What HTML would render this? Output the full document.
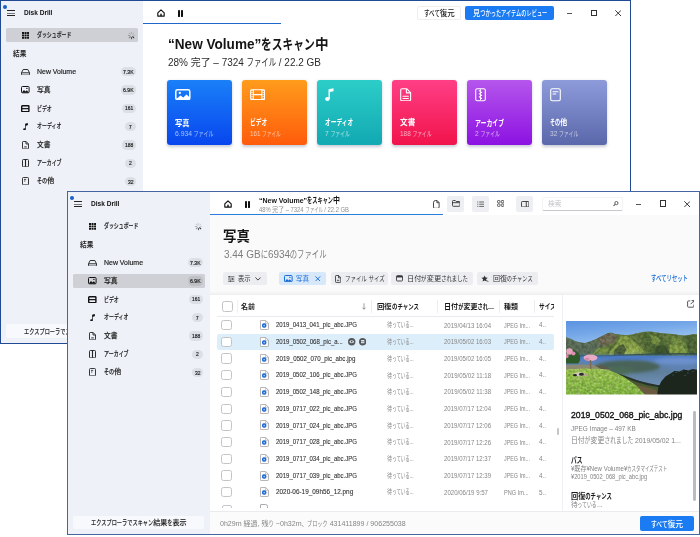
<!DOCTYPE html>
<html lang="ja"><head><meta charset="utf-8"><title>Disk Drill</title>
<style>
html,body{margin:0;padding:0}
body{width:700px;height:537px;position:relative;overflow:hidden;background:#fff;font-family:"Liberation Sans","Noto Sans CJK JP",sans-serif;}
body div,body svg,.t{position:absolute;}
.t{white-space:nowrap;display:block;}
div{box-sizing:border-box}
</style></head><body>
<div id="window-dashboard" style="left:0;top:0;width:700px;height:537px">
<div style="left:0px;top:0px;width:631px;height:344px;background:#fff;border:1px solid #214a94;"></div>
<div class="sidebar" style="left:0;top:0;width:700px;height:537px">
<div style="left:1px;top:1px;width:142px;height:342px;background:#eef1f8;"></div>
<div style="left:2.8px;top:4.8px;width:4.3px;height:4.3px;background:#1b5fc9;border-radius:50%;"></div>
<div style="left:6.7px;top:10px;width:8px;height:0.9px;background:#222;"></div>
<div style="left:6.7px;top:12.5px;width:8px;height:0.9px;background:#777;"></div>
<div style="left:6.7px;top:15px;width:8px;height:0.9px;background:#222;"></div>
<span id="t1" class="t" style="top:7.18px;font-size:7.7px;line-height:11.55px;color:#111;font-weight:700;left:23.9px;transform-origin:0 50%;transform:scaleX(0.8521);">Disk Drill</span>
<div style="left:6px;top:28px;width:131.5px;height:14.4px;background:#ced0d5;border-radius:1.5px;"></div>
<svg style="left:22.2px;top:32px;" width="7.2" height="6.8" viewBox="0 0 7.2 6.8"><rect x="0.00" y="0.00" width="2.05" height="1.95" rx=".3" fill="#111"/><rect x="2.55" y="0.00" width="2.05" height="1.95" rx=".3" fill="#111"/><rect x="5.10" y="0.00" width="2.05" height="1.95" rx=".3" fill="#111"/><rect x="0.00" y="2.40" width="2.05" height="1.95" rx=".3" fill="#111"/><rect x="2.55" y="2.40" width="2.05" height="1.95" rx=".3" fill="#111"/><rect x="5.10" y="2.40" width="2.05" height="1.95" rx=".3" fill="#111"/><rect x="0.00" y="4.80" width="2.05" height="1.95" rx=".3" fill="#111"/><rect x="2.55" y="4.80" width="2.05" height="1.95" rx=".3" fill="#111"/><rect x="5.10" y="4.80" width="2.05" height="1.95" rx=".3" fill="#111"/></svg>
<span id="t2" class="t" style="top:29.89px;font-size:7.1px;line-height:10.65px;color:#1f1f1f;font-weight:500;-webkit-text-stroke:0.18px #1f1f1f;left:36.6px;transform-origin:0 50%;transform:scaleX(0.9362);"><span style="display:inline-block;transform:scaleX(0.74);transform-origin:0 50%;margin-right:-1.820em">ダッシュボード</span></span>
<svg style="left:127.1px;top:30.8px;" width="9" height="9" viewBox="0 0 9 9"><path d="M6.20 4.50L7.70 4.50" stroke="#222" stroke-opacity="0.14" stroke-width="1.050" stroke-linecap="round"/><path d="M5.70 5.70L6.76 6.76" stroke="#222" stroke-opacity="0.95" stroke-width="1.050" stroke-linecap="round"/><path d="M4.50 6.20L4.50 7.70" stroke="#222" stroke-opacity="0.7" stroke-width="1.050" stroke-linecap="round"/><path d="M3.30 5.70L2.24 6.76" stroke="#222" stroke-opacity="0.45" stroke-width="1.050" stroke-linecap="round"/><path d="M2.80 4.50L1.30 4.50" stroke="#222" stroke-opacity="0.3" stroke-width="1.050" stroke-linecap="round"/><path d="M3.30 3.30L2.24 2.24" stroke="#222" stroke-opacity="0.2" stroke-width="1.050" stroke-linecap="round"/><path d="M4.50 2.80L4.50 1.30" stroke="#222" stroke-opacity="0.16" stroke-width="1.050" stroke-linecap="round"/><path d="M5.70 3.30L6.76 2.24" stroke="#222" stroke-opacity="0.14" stroke-width="1.050" stroke-linecap="round"/></svg>
<span id="t3" class="t" style="top:49.38px;font-size:7.1px;line-height:10.65px;color:#1f1f1f;font-weight:700;left:12.9px;transform-origin:0 50%;transform:scaleX(0.9445);">結果</span>
<svg style="left:21.2px;top:68.6px;" width="9" height="6.6" viewBox="0 0 9 6.6"><path d="M2.2 .5h4.6l1.7 3.2v1.6a.8.8 0 0 1-.8.8H1.3a.8.8 0 0 1-.8-.8V3.7z M.6 3.8h7.8" fill="none" stroke="#222" stroke-width=".95" stroke-linejoin="round"/></svg>
<span id="t4" class="t" style="top:67.06px;font-size:7.1px;line-height:10.65px;color:#1f1f1f;font-weight:500;-webkit-text-stroke:0.18px #1f1f1f;left:36.7px;transform-origin:0 50%;transform:scaleX(0.9792);">New Volume</span>
<svg style="left:21.4px;top:86.4px;" width="8.6" height="7.3" viewBox="0 0 8.6 7.3"><rect x=".5" y=".5" width="7.6" height="6.3" rx=".9" fill="none" stroke="#111" stroke-width="1"/><path d="M.8 6.5l2.2-2.6 1.5 1.5 1.3-1.2 2 2.3z" fill="#111"/><circle cx="5.9" cy="2.4" r=".7" fill="#111"/></svg>
<span id="t5" class="t" style="top:85px;font-size:7.1px;line-height:10.65px;color:#1f1f1f;font-weight:500;-webkit-text-stroke:0.18px #1f1f1f;left:36.7px;transform-origin:0 50%;transform:scaleX(0.9515);">写真</span>
<svg style="left:21.4px;top:104.6px;" width="8.6" height="7.3" viewBox="0 0 8.6 7.3"><rect x=".7" y=".7" width="7.2" height="5.9" rx=".6" fill="none" stroke="#111" stroke-width="1.4"/><path d="M.7 3.65h7.2" stroke="#111" stroke-width="1.2"/></svg>
<span id="t6" class="t" style="top:103.5px;font-size:7.1px;line-height:10.65px;color:#1f1f1f;font-weight:500;-webkit-text-stroke:0.18px #1f1f1f;left:36.7px;transform-origin:0 50%;transform:scaleX(0.9398);"><span style="display:inline-block;transform:scaleX(0.74);transform-origin:0 50%;margin-right:-0.780em">ビデオ</span></span>
<svg style="left:23.2px;top:122.7px;" width="5" height="7.6" viewBox="0 0 5 7.6"><path d="M2.500 6.200V.9L4.700.4v1.500L2.500 2.400" fill="#111" stroke="#111" stroke-width=".7" stroke-linejoin="round"/><ellipse cx="1.500" cy="6.300" rx="1.300" ry="1" fill="#111"/></svg>
<span id="t7" class="t" style="top:120.92px;font-size:7.1px;line-height:10.65px;color:#1f1f1f;font-weight:500;-webkit-text-stroke:0.18px #1f1f1f;left:36.5px;transform-origin:0 50%;transform:scaleX(0.9425);"><span style="display:inline-block;transform:scaleX(0.74);transform-origin:0 50%;margin-right:-1.300em">オーディオ</span></span>
<svg style="left:22.2px;top:140.7px;" width="7" height="8.4" viewBox="0 0 7 8.4"><path d="M1.2.5h2.9l2.4 2.4v4.3a.7.7 0 0 1-.7.7H1.2a.7.7 0 0 1-.7-.7V1.2a.7.7 0 0 1 .7-.7z M4 .6v2.4h2.4 M2.2 5.9h2.6" fill="none" stroke="#222" stroke-width=".9" stroke-linejoin="round"/></svg>
<span id="t8" class="t" style="top:139.72px;font-size:7.1px;line-height:10.65px;color:#1f1f1f;font-weight:500;-webkit-text-stroke:0.18px #1f1f1f;left:36.7px;transform-origin:0 50%;transform:scaleX(0.9445);">文書</span>
<svg style="left:22.2px;top:158.6px;" width="7" height="8.4" viewBox="0 0 7 8.4"><rect x=".5" y=".5" width="6" height="7.4" rx=".9" fill="none" stroke="#222" stroke-width=".95"/><path d="M3.5 .6v7.2" stroke="#222" stroke-width="1.1"/></svg>
<span id="t9" class="t" style="top:158.11px;font-size:7.1px;line-height:10.65px;color:#1f1f1f;font-weight:500;-webkit-text-stroke:0.18px #1f1f1f;left:36.7px;transform-origin:0 50%;transform:scaleX(0.9485);"><span style="display:inline-block;transform:scaleX(0.74);transform-origin:0 50%;margin-right:-1.300em">アーカイブ</span></span>
<svg style="left:22.2px;top:176.6px;" width="7" height="8.4" viewBox="0 0 7 8.4"><rect x=".5" y=".5" width="6" height="7.4" rx=".9" fill="none" stroke="#222" stroke-width=".9"/><path d="M2 2.4h2.2 M2 4h1.4" stroke="#222" stroke-width=".8"/></svg>
<span id="t10" class="t" style="top:176.31px;font-size:7.1px;line-height:10.65px;color:#1f1f1f;font-weight:500;-webkit-text-stroke:0.18px #1f1f1f;left:36.7px;transform-origin:0 50%;transform:scaleX(0.9719);"><span style="display:inline-block;transform:scaleX(0.74);transform-origin:0 50%;margin-right:-0.520em">その</span>他</span>
<div style="left:120.5px;top:67.3px;width:15.5px;height:9.2px;background:rgba(0,0,10,.075);border-radius:4.600px;"></div>
<span id="t11" class="t" style="top:67.28px;font-size:6.1px;line-height:9.15px;color:#1a1a1a;-webkit-text-stroke:0.18px #1a1a1a;left:122.95px;transform-origin:0 50%;transform:scaleX(0.8448);">7.3K</span>
<div style="left:120.5px;top:85.4px;width:15.5px;height:9.2px;background:rgba(0,0,10,.075);border-radius:4.600px;"></div>
<span id="t12" class="t" style="top:85.36px;font-size:6.1px;line-height:9.15px;color:#1a1a1a;-webkit-text-stroke:0.18px #1a1a1a;left:122.95px;transform-origin:0 50%;transform:scaleX(0.8448);">6.9K</span>
<div style="left:122px;top:103.9px;width:14px;height:9.2px;background:rgba(0,0,10,.075);border-radius:4.600px;"></div>
<span id="t13" class="t" style="top:103.28px;font-size:6.1px;line-height:9.15px;color:#1a1a1a;-webkit-text-stroke:0.18px #1a1a1a;left:124.9px;transform-origin:0 50%;transform:scaleX(0.8061);">161</span>
<div style="left:125px;top:122.3px;width:11px;height:9.2px;background:rgba(0,0,10,.075);border-radius:4.600px;"></div>
<span id="t14" class="t" style="top:122.23px;font-size:6.1px;line-height:9.15px;color:#1a1a1a;-webkit-text-stroke:0.18px #1a1a1a;left:129.2px;transform-origin:0 50%;transform:scaleX(0.7668);">7</span>
<div style="left:122px;top:140.4px;width:14px;height:9.2px;background:rgba(0,0,10,.075);border-radius:4.600px;"></div>
<span id="t15" class="t" style="top:140.34px;font-size:6.1px;line-height:9.15px;color:#1a1a1a;-webkit-text-stroke:0.18px #1a1a1a;left:124.8px;transform-origin:0 50%;transform:scaleX(0.8258);">188</span>
<div style="left:125px;top:158.7px;width:11px;height:9.2px;background:rgba(0,0,10,.075);border-radius:4.600px;"></div>
<span id="t16" class="t" style="top:157.92px;font-size:6.1px;line-height:9.15px;color:#1a1a1a;-webkit-text-stroke:0.18px #1a1a1a;left:129.1px;transform-origin:0 50%;transform:scaleX(0.8258);">2</span>
<div style="left:124.6px;top:177px;width:11.4px;height:9.2px;background:rgba(0,0,10,.075);border-radius:4.600px;"></div>
<span id="t17" class="t" style="top:176.56px;font-size:6.1px;line-height:9.15px;color:#1a1a1a;-webkit-text-stroke:0.18px #1a1a1a;left:127.5px;transform-origin:0 50%;transform:scaleX(0.8258);">32</span>
<div style="left:6px;top:323.9px;width:130.5px;height:13.8px;background:#f8f9fc;border-radius:1.5px;"></div>
<span id="t18" class="t" style="top:326.78px;font-size:7px;line-height:10.5px;color:#1f1f1f;font-weight:500;-webkit-text-stroke:0.1px #1f1f1f;left:24px;transform-origin:0 50%;transform:scaleX(1.0036);"><span style="display:inline-block;transform:scaleX(0.74);transform-origin:0 50%;margin-right:-3.120em">エクスプローラでスキャン</span>結果<span style="display:inline-block;transform:scaleX(0.74);transform-origin:0 50%;margin-right:-0.260em">を</span>表示</span>
</div>
<div class="main" style="left:0;top:0;width:700px;height:537px">
<svg style="left:156.5px;top:9.3px;" width="8" height="7.8" viewBox="0 0 8 7.8"><path d="M.8 3.900L4 .8 7.200 3.900V7.100H.8z" fill="none" stroke="#111" stroke-width="1.150" stroke-linejoin="round"/><path d="M3.300 7V5.100a.7.700 0 0 1 1.400 0V7z" fill="#111"/></svg>
<div style="left:177.5px;top:10.1px;width:2px;height:6.9px;background:#111;border-radius:.4px;"></div>
<div style="left:180.9px;top:10.1px;width:2px;height:6.9px;background:#111;border-radius:.4px;"></div>
<div style="left:143px;top:22.6px;width:138.3px;height:1.5px;background:#2067cc;"></div>
<div style="left:416.5px;top:6px;width:44.5px;height:14px;background:#fff;border:1px solid #eeeef1;border-radius:2px;"></div>
<span id="t19" class="t" style="top:8.01px;font-size:7.7px;line-height:11.55px;color:#222;font-weight:500;left:423.5px;transform-origin:0 50%;transform:scaleX(0.9681);"><span style="display:inline-block;transform:scaleX(0.74);transform-origin:0 50%;margin-right:-0.780em">すべて</span>復元</span>
<div style="left:465px;top:6px;width:88.6px;height:14px;background:#1a7bf2;border-radius:2px;"></div>
<span id="t20" class="t" style="top:8.45px;font-size:7.7px;line-height:11.55px;color:#fff;font-weight:500;left:473.1px;transform-origin:0 50%;transform:scaleX(0.9126);">見<span style="display:inline-block;transform:scaleX(0.74);transform-origin:0 50%;margin-right:-3.380em">つかったアイテムのレビュー</span></span>
<div style="left:567.2px;top:13px;width:5px;height:0.9px;background:#555;"></div>
<div style="left:590.5px;top:9.9px;width:6.4px;height:6.4px;background:transparent;border:.8px solid #333;"></div>
<svg style="left:614.5px;top:10px;" width="6.4" height="6.4" viewBox="0 0 6.4 6.4"><path d="M.3.3L6.1 6.1M6.1.3L.3 6.1" stroke="#222" stroke-width=".9"/></svg>
<span id="t21" class="t" style="top:33.9px;font-size:14px;line-height:21px;color:#151515;font-weight:700;left:167.5px;transform-origin:0 50%;transform:scaleX(0.9697);">“New Volume”<span style="display:inline-block;transform:scaleX(0.79);transform-origin:0 50%;margin-right:-1.050em">をスキャン</span>中</span>
<span id="t22" class="t" style="top:54.79px;font-size:10.4px;line-height:15.6px;color:#2b2b2b;left:167.6px;transform-origin:0 50%;transform:scaleX(0.9582);">28% 完了 – 7324 <span style="display:inline-block;transform:scaleX(0.74);transform-origin:0 50%;margin-right:-1.040em">ファイル</span> / 22.2 GB</span>
<div style="left:167px;top:80px;width:65px;height:65px;background:linear-gradient(180deg,#1a80f8,#0846ee);border-radius:3px;box-shadow:0 1.5px 3px rgba(60,70,110,.28);"></div>
<span id="t23" class="t" style="top:116.86px;font-size:8.3px;line-height:12.45px;color:#fff;font-weight:700;left:175px;transform-origin:0 50%;transform:scaleX(0.8670);">写真</span>
<span id="t24" class="t" style="top:129.04px;font-size:7.3px;line-height:10.95px;color:rgba(255,255,255,.62);left:175px;transform-origin:0 50%;transform:scaleX(0.9261);">6.934 <span style="display:inline-block;transform:scaleX(0.74);transform-origin:0 50%;margin-right:-1.040em">ファイル</span></span>
<div style="left:242px;top:80px;width:65px;height:65px;background:linear-gradient(180deg,#ff9c1c,#ff5b0b);border-radius:3px;box-shadow:0 1.5px 3px rgba(60,70,110,.28);"></div>
<span id="t25" class="t" style="top:116.19px;font-size:8.3px;line-height:12.45px;color:#fff;font-weight:700;left:250px;transform-origin:0 50%;transform:scaleX(0.9332);"><span style="display:inline-block;transform:scaleX(0.74);transform-origin:0 50%;margin-right:-0.780em">ビデオ</span></span>
<span id="t26" class="t" style="top:128.97px;font-size:7.3px;line-height:10.95px;color:rgba(255,255,255,.62);left:250px;transform-origin:0 50%;transform:scaleX(0.8631);">161 <span style="display:inline-block;transform:scaleX(0.74);transform-origin:0 50%;margin-right:-1.040em">ファイル</span></span>
<div style="left:317px;top:80px;width:65px;height:65px;background:linear-gradient(180deg,#2ccdc9,#12a9b2);border-radius:3px;box-shadow:0 1.5px 3px rgba(60,70,110,.28);"></div>
<span id="t27" class="t" style="top:116.09px;font-size:8.3px;line-height:12.45px;color:#fff;font-weight:700;left:325px;transform-origin:0 50%;transform:scaleX(0.9283);"><span style="display:inline-block;transform:scaleX(0.74);transform-origin:0 50%;margin-right:-1.300em">オーディオ</span></span>
<span id="t28" class="t" style="top:129.09px;font-size:7.3px;line-height:10.95px;color:rgba(255,255,255,.62);left:325px;transform-origin:0 50%;transform:scaleX(0.9064);">7 <span style="display:inline-block;transform:scaleX(0.74);transform-origin:0 50%;margin-right:-1.040em">ファイル</span></span>
<div style="left:392px;top:80px;width:65px;height:65px;background:linear-gradient(180deg,#ff3f86,#f1134b);border-radius:3px;box-shadow:0 1.5px 3px rgba(60,70,110,.28);"></div>
<span id="t29" class="t" style="top:116.13px;font-size:8.3px;line-height:12.45px;color:#fff;font-weight:700;left:400px;transform-origin:0 50%;transform:scaleX(0.9212);">文書</span>
<span id="t30" class="t" style="top:129px;font-size:7.3px;line-height:10.95px;color:rgba(255,255,255,.62);left:400px;transform-origin:0 50%;transform:scaleX(0.8882);">188 <span style="display:inline-block;transform:scaleX(0.74);transform-origin:0 50%;margin-right:-1.040em">ファイル</span></span>
<div style="left:467px;top:80px;width:65px;height:65px;background:linear-gradient(180deg,#b556ec,#8c12e2);border-radius:3px;box-shadow:0 1.5px 3px rgba(60,70,110,.28);"></div>
<span id="t31" class="t" style="top:116.92px;font-size:8.3px;line-height:12.45px;color:#fff;font-weight:700;left:475px;transform-origin:0 50%;transform:scaleX(0.9624);"><span style="display:inline-block;transform:scaleX(0.74);transform-origin:0 50%;margin-right:-1.300em">アーカイブ</span></span>
<span id="t32" class="t" style="top:128.97px;font-size:7.3px;line-height:10.95px;color:rgba(255,255,255,.62);left:475px;transform-origin:0 50%;transform:scaleX(0.9064);">2 <span style="display:inline-block;transform:scaleX(0.74);transform-origin:0 50%;margin-right:-1.040em">ファイル</span></span>
<div style="left:542px;top:80px;width:65px;height:65px;background:linear-gradient(180deg,#8d9bdb,#5a67aa);border-radius:3px;box-shadow:0 1.5px 3px rgba(60,70,110,.28);"></div>
<span id="t33" class="t" style="top:116.46px;font-size:8.3px;line-height:12.45px;color:#fff;font-weight:700;left:550px;transform-origin:0 50%;transform:scaleX(0.8297);"><span style="display:inline-block;transform:scaleX(0.74);transform-origin:0 50%;margin-right:-0.520em">その</span>他</span>
<span id="t34" class="t" style="top:129.01px;font-size:7.3px;line-height:10.95px;color:rgba(255,255,255,.62);left:550px;transform-origin:0 50%;transform:scaleX(0.9006);">32 <span style="display:inline-block;transform:scaleX(0.74);transform-origin:0 50%;margin-right:-1.040em">ファイル</span></span>
<svg style="left:175px;top:88.8px;" width="15.8" height="11.6" viewBox="0 0 15.8 11.6"><rect x=".8" y=".8" width="14" height="9.800" rx="1.700" fill="none" stroke="#fff" stroke-width="1.500"/><path d="M1.200 10l4.300-3.400 2.800 2 3.200-3 3.500 3.200V10z" fill="#fff"/><circle cx="4.800" cy="4" r="1.150" fill="#fff"/></svg>
<svg style="left:250px;top:88.8px;" width="15.4" height="11.6" viewBox="0 0 15.4 11.6"><rect x=".7" y=".7" width="13.800" height="9.900" rx=".9" fill="none" stroke="#fff" stroke-width="1.1" stroke-linejoin="round" stroke-linecap="round" stroke-width="1.300"/><path d="M3.300.8v9.800M11.900.8v9.800M3.300 5.650h8.600" fill="none" stroke="#fff" stroke-width="1.1" stroke-linejoin="round" stroke-linecap="round" stroke-width="1.100"/><path d="M2 1.200v9M13.200 1.200v9" stroke="#fff" stroke-width="1.300" stroke-dasharray=".9 1.100" fill="none"/></svg>
<svg style="left:325px;top:88px;" width="9" height="14" viewBox="0 0 9 14"><ellipse cx="2.400" cy="11" rx="2.300" ry="2" fill="#fff"/><path d="M3.500 11V1.300L8.500.3v2.900L4.900 4v7z" fill="#fff"/></svg>
<svg style="left:400px;top:88px;" width="11.6" height="13.4" viewBox="0 0 11.6 13.4"><path d="M2 .7h4.600l4 4v6.800a1.300 1.300 0 0 1-1.300 1.300H2A1.300 1.300 0 0 1 .7 11.500V2A1.300 1.300 0 0 1 2 .7z M6.400.9v4h4" fill="none" stroke="#fff" stroke-width="1.1" stroke-linejoin="round" stroke-linecap="round" stroke-width="1.300"/><path d="M3 8.300h5.400M3 10.500h5.400" fill="none" stroke="#fff" stroke-width="1.1" stroke-linejoin="round" stroke-linecap="round" stroke-width="1.200"/></svg>
<svg style="left:475px;top:88px;" width="11.4" height="13.6" viewBox="0 0 11.4 13.6"><rect x=".7" y=".7" width="9.600" height="12" rx="1.500" fill="none" stroke="#fff" stroke-width="1.1" stroke-linejoin="round" stroke-linecap="round" stroke-width="1.300"/><path d="M5.500 1.200v11" stroke="#fff" stroke-width=".9"/><path d="M3.900 2.900h1.600M5.500 4.400h1.600M3.900 5.900h1.600M5.500 7.400h1.600M3.900 8.900h1.600M5.500 10.400h1.600" stroke="#fff" stroke-width="1.200"/></svg>
<svg style="left:549.6px;top:88px;" width="11.4" height="13.6" viewBox="0 0 11.4 13.6"><rect x=".7" y=".7" width="9.600" height="12" rx="1.500" fill="none" stroke="#fff" stroke-width="1.1" stroke-linejoin="round" stroke-linecap="round" stroke-width="1.300"/><path d="M3 3.700h5M3 6h2.800" fill="none" stroke="#fff" stroke-width="1.1" stroke-linejoin="round" stroke-linecap="round" stroke-width="1.100"/></svg>
</div></div>
<div id="window-results" style="left:0;top:0;width:700px;height:537px">
<div style="left:67px;top:191px;width:633px;height:344px;background:#fff;border:1px solid #4663a2;border-left-width:1.300px;"></div>
<div class="sidebar" style="left:0;top:0;width:700px;height:537px">
<div style="left:68px;top:192px;width:142px;height:342px;background:#eef1f8;"></div>
<div style="left:69.8px;top:195.8px;width:4.3px;height:4.3px;background:#1b5fc9;border-radius:50%;"></div>
<div style="left:73.7px;top:201px;width:8px;height:0.9px;background:#222;"></div>
<div style="left:73.7px;top:203.5px;width:8px;height:0.9px;background:#777;"></div>
<div style="left:73.7px;top:206px;width:8px;height:0.9px;background:#222;"></div>
<span id="t35" class="t" style="top:198.18px;font-size:7.7px;line-height:11.55px;color:#111;font-weight:700;left:90.9px;transform-origin:0 50%;transform:scaleX(0.8521);">Disk Drill</span>
<div style="left:73px;top:273.6px;width:131.5px;height:14.4px;background:#ced0d5;border-radius:1.5px;"></div>
<svg style="left:89.2px;top:223px;" width="7.2" height="6.8" viewBox="0 0 7.2 6.8"><rect x="0.00" y="0.00" width="2.05" height="1.95" rx=".3" fill="#111"/><rect x="2.55" y="0.00" width="2.05" height="1.95" rx=".3" fill="#111"/><rect x="5.10" y="0.00" width="2.05" height="1.95" rx=".3" fill="#111"/><rect x="0.00" y="2.40" width="2.05" height="1.95" rx=".3" fill="#111"/><rect x="2.55" y="2.40" width="2.05" height="1.95" rx=".3" fill="#111"/><rect x="5.10" y="2.40" width="2.05" height="1.95" rx=".3" fill="#111"/><rect x="0.00" y="4.80" width="2.05" height="1.95" rx=".3" fill="#111"/><rect x="2.55" y="4.80" width="2.05" height="1.95" rx=".3" fill="#111"/><rect x="5.10" y="4.80" width="2.05" height="1.95" rx=".3" fill="#111"/></svg>
<span id="t36" class="t" style="top:220.89px;font-size:7.1px;line-height:10.65px;color:#1f1f1f;font-weight:500;-webkit-text-stroke:0.18px #1f1f1f;left:103.6px;transform-origin:0 50%;transform:scaleX(0.9362);"><span style="display:inline-block;transform:scaleX(0.74);transform-origin:0 50%;margin-right:-1.820em">ダッシュボード</span></span>
<svg style="left:194.1px;top:221.8px;" width="9" height="9" viewBox="0 0 9 9"><path d="M6.20 4.50L7.70 4.50" stroke="#222" stroke-opacity="0.14" stroke-width="1.050" stroke-linecap="round"/><path d="M5.70 5.70L6.76 6.76" stroke="#222" stroke-opacity="0.95" stroke-width="1.050" stroke-linecap="round"/><path d="M4.50 6.20L4.50 7.70" stroke="#222" stroke-opacity="0.7" stroke-width="1.050" stroke-linecap="round"/><path d="M3.30 5.70L2.24 6.76" stroke="#222" stroke-opacity="0.45" stroke-width="1.050" stroke-linecap="round"/><path d="M2.80 4.50L1.30 4.50" stroke="#222" stroke-opacity="0.3" stroke-width="1.050" stroke-linecap="round"/><path d="M3.30 3.30L2.24 2.24" stroke="#222" stroke-opacity="0.2" stroke-width="1.050" stroke-linecap="round"/><path d="M4.50 2.80L4.50 1.30" stroke="#222" stroke-opacity="0.16" stroke-width="1.050" stroke-linecap="round"/><path d="M5.70 3.30L6.76 2.24" stroke="#222" stroke-opacity="0.14" stroke-width="1.050" stroke-linecap="round"/></svg>
<span id="t37" class="t" style="top:240.38px;font-size:7.1px;line-height:10.65px;color:#1f1f1f;font-weight:700;left:79.9px;transform-origin:0 50%;transform:scaleX(0.9445);">結果</span>
<svg style="left:88.2px;top:259.6px;" width="9" height="6.6" viewBox="0 0 9 6.6"><path d="M2.2 .5h4.6l1.7 3.2v1.6a.8.8 0 0 1-.8.8H1.3a.8.8 0 0 1-.8-.8V3.7z M.6 3.8h7.8" fill="none" stroke="#222" stroke-width=".95" stroke-linejoin="round"/></svg>
<span id="t38" class="t" style="top:258.07px;font-size:7.1px;line-height:10.65px;color:#1f1f1f;font-weight:500;-webkit-text-stroke:0.18px #1f1f1f;left:103.7px;transform-origin:0 50%;transform:scaleX(0.9792);">New Volume</span>
<svg style="left:88.4px;top:277.4px;" width="8.6" height="7.3" viewBox="0 0 8.6 7.3"><rect x=".5" y=".5" width="7.6" height="6.3" rx=".9" fill="none" stroke="#111" stroke-width="1"/><path d="M.8 6.5l2.2-2.6 1.5 1.5 1.3-1.2 2 2.3z" fill="#111"/><circle cx="5.9" cy="2.4" r=".7" fill="#111"/></svg>
<span id="t39" class="t" style="top:276px;font-size:7.1px;line-height:10.65px;color:#1f1f1f;font-weight:500;-webkit-text-stroke:0.18px #1f1f1f;left:103.7px;transform-origin:0 50%;transform:scaleX(0.9515);">写真</span>
<svg style="left:88.4px;top:295.6px;" width="8.6" height="7.3" viewBox="0 0 8.6 7.3"><rect x=".7" y=".7" width="7.2" height="5.9" rx=".6" fill="none" stroke="#111" stroke-width="1.4"/><path d="M.7 3.65h7.2" stroke="#111" stroke-width="1.2"/></svg>
<span id="t40" class="t" style="top:294.5px;font-size:7.1px;line-height:10.65px;color:#1f1f1f;font-weight:500;-webkit-text-stroke:0.18px #1f1f1f;left:103.7px;transform-origin:0 50%;transform:scaleX(0.9398);"><span style="display:inline-block;transform:scaleX(0.74);transform-origin:0 50%;margin-right:-0.780em">ビデオ</span></span>
<svg style="left:90.2px;top:313.7px;" width="5" height="7.6" viewBox="0 0 5 7.6"><path d="M2.500 6.200V.9L4.700.4v1.500L2.500 2.400" fill="#111" stroke="#111" stroke-width=".7" stroke-linejoin="round"/><ellipse cx="1.500" cy="6.300" rx="1.300" ry="1" fill="#111"/></svg>
<span id="t41" class="t" style="top:311.91px;font-size:7.1px;line-height:10.65px;color:#1f1f1f;font-weight:500;-webkit-text-stroke:0.18px #1f1f1f;left:103.5px;transform-origin:0 50%;transform:scaleX(0.9425);"><span style="display:inline-block;transform:scaleX(0.74);transform-origin:0 50%;margin-right:-1.300em">オーディオ</span></span>
<svg style="left:89.2px;top:331.7px;" width="7" height="8.4" viewBox="0 0 7 8.4"><path d="M1.2.5h2.9l2.4 2.4v4.3a.7.7 0 0 1-.7.7H1.2a.7.7 0 0 1-.7-.7V1.2a.7.7 0 0 1 .7-.7z M4 .6v2.4h2.4 M2.2 5.9h2.6" fill="none" stroke="#222" stroke-width=".9" stroke-linejoin="round"/></svg>
<span id="t42" class="t" style="top:330.72px;font-size:7.1px;line-height:10.65px;color:#1f1f1f;font-weight:500;-webkit-text-stroke:0.18px #1f1f1f;left:103.7px;transform-origin:0 50%;transform:scaleX(0.9445);">文書</span>
<svg style="left:89.2px;top:349.6px;" width="7" height="8.4" viewBox="0 0 7 8.4"><rect x=".5" y=".5" width="6" height="7.4" rx=".9" fill="none" stroke="#222" stroke-width=".95"/><path d="M3.5 .6v7.2" stroke="#222" stroke-width="1.1"/></svg>
<span id="t43" class="t" style="top:349.1px;font-size:7.1px;line-height:10.65px;color:#1f1f1f;font-weight:500;-webkit-text-stroke:0.18px #1f1f1f;left:103.7px;transform-origin:0 50%;transform:scaleX(0.9485);"><span style="display:inline-block;transform:scaleX(0.74);transform-origin:0 50%;margin-right:-1.300em">アーカイブ</span></span>
<svg style="left:89.2px;top:367.6px;" width="7" height="8.4" viewBox="0 0 7 8.4"><rect x=".5" y=".5" width="6" height="7.4" rx=".9" fill="none" stroke="#222" stroke-width=".9"/><path d="M2 2.4h2.2 M2 4h1.4" stroke="#222" stroke-width=".8"/></svg>
<span id="t44" class="t" style="top:367.31px;font-size:7.1px;line-height:10.65px;color:#1f1f1f;font-weight:500;-webkit-text-stroke:0.18px #1f1f1f;left:103.7px;transform-origin:0 50%;transform:scaleX(0.9719);"><span style="display:inline-block;transform:scaleX(0.74);transform-origin:0 50%;margin-right:-0.520em">その</span>他</span>
<div style="left:187.5px;top:258.3px;width:15.5px;height:9.2px;background:rgba(0,0,10,.075);border-radius:4.600px;"></div>
<span id="t45" class="t" style="top:258.28px;font-size:6.1px;line-height:9.15px;color:#1a1a1a;-webkit-text-stroke:0.18px #1a1a1a;left:189.95px;transform-origin:0 50%;transform:scaleX(0.8448);">7.3K</span>
<div style="left:187.5px;top:276.4px;width:15.5px;height:9.2px;background:rgba(0,0,10,.075);border-radius:4.600px;"></div>
<span id="t46" class="t" style="top:276.36px;font-size:6.1px;line-height:9.15px;color:#1a1a1a;-webkit-text-stroke:0.18px #1a1a1a;left:189.95px;transform-origin:0 50%;transform:scaleX(0.8448);">6.9K</span>
<div style="left:189px;top:294.9px;width:14px;height:9.2px;background:rgba(0,0,10,.075);border-radius:4.600px;"></div>
<span id="t47" class="t" style="top:294.29px;font-size:6.1px;line-height:9.15px;color:#1a1a1a;-webkit-text-stroke:0.18px #1a1a1a;left:191.9px;transform-origin:0 50%;transform:scaleX(0.8061);">161</span>
<div style="left:192px;top:313.3px;width:11px;height:9.2px;background:rgba(0,0,10,.075);border-radius:4.600px;"></div>
<span id="t48" class="t" style="top:313.22px;font-size:6.1px;line-height:9.15px;color:#1a1a1a;-webkit-text-stroke:0.18px #1a1a1a;left:196.2px;transform-origin:0 50%;transform:scaleX(0.7668);">7</span>
<div style="left:189px;top:331.4px;width:14px;height:9.2px;background:rgba(0,0,10,.075);border-radius:4.600px;"></div>
<span id="t49" class="t" style="top:331.34px;font-size:6.1px;line-height:9.15px;color:#1a1a1a;-webkit-text-stroke:0.18px #1a1a1a;left:191.8px;transform-origin:0 50%;transform:scaleX(0.8258);">188</span>
<div style="left:192px;top:349.7px;width:11px;height:9.2px;background:rgba(0,0,10,.075);border-radius:4.600px;"></div>
<span id="t50" class="t" style="top:348.92px;font-size:6.1px;line-height:9.15px;color:#1a1a1a;-webkit-text-stroke:0.18px #1a1a1a;left:196.1px;transform-origin:0 50%;transform:scaleX(0.8258);">2</span>
<div style="left:191.6px;top:368px;width:11.4px;height:9.2px;background:rgba(0,0,10,.075);border-radius:4.600px;"></div>
<span id="t51" class="t" style="top:367.57px;font-size:6.1px;line-height:9.15px;color:#1a1a1a;-webkit-text-stroke:0.18px #1a1a1a;left:194.5px;transform-origin:0 50%;transform:scaleX(0.8258);">32</span>
<div style="left:73px;top:515.5px;width:130.5px;height:13.8px;background:#f8f9fc;border-radius:1.5px;"></div>
<span id="t52" class="t" style="top:518px;font-size:7px;line-height:10.5px;color:#1f1f1f;font-weight:500;-webkit-text-stroke:0.1px #1f1f1f;left:91px;transform-origin:0 50%;transform:scaleX(1.0036);"><span style="display:inline-block;transform:scaleX(0.74);transform-origin:0 50%;margin-right:-3.120em">エクスプローラでスキャン</span>結果<span style="display:inline-block;transform:scaleX(0.74);transform-origin:0 50%;margin-right:-0.260em">を</span>表示</span>
</div>
<div class="toolbar" style="left:0;top:0;width:700px;height:537px">
<svg style="left:224px;top:200.4px;" width="8" height="7.8" viewBox="0 0 8 7.8"><path d="M.8 3.900L4 .8 7.200 3.900V7.100H.8z" fill="none" stroke="#111" stroke-width="1.150" stroke-linejoin="round"/><path d="M3.300 7V5.100a.7.700 0 0 1 1.400 0V7z" fill="#111"/></svg>
<div style="left:245px;top:201px;width:2px;height:6.9px;background:#111;border-radius:.4px;"></div>
<div style="left:248.4px;top:201px;width:2px;height:6.9px;background:#111;border-radius:.4px;"></div>
<span id="t53" class="t" style="top:195.41px;font-size:8px;line-height:12px;color:#151515;font-weight:700;left:259px;transform-origin:0 50%;transform:scaleX(0.8748);">“New Volume”<span style="display:inline-block;transform:scaleX(0.74);transform-origin:0 50%;margin-right:-1.300em">をスキャン</span>中</span>
<span id="t54" class="t" style="top:205.02px;font-size:6.8px;line-height:10.2px;color:#909090;left:259px;transform-origin:0 50%;transform:scaleX(0.8621);">48% 完了 – 7324 <span style="display:inline-block;transform:scaleX(0.74);transform-origin:0 50%;margin-right:-1.040em">ファイル</span> / 22.2 GB</span>
<div style="left:210px;top:213.8px;width:232.7px;height:1.7px;background:#2a7ede;"></div>
<svg style="left:433.4px;top:199.6px;" width="6.6" height="8.8" viewBox="0 0 6.6 8.8"><path d="M2.600.5h1.500l2 2v4.600a1.200 1.200 0 0 1-1.200 1.200H1.700A1.200 1.200 0 0 1 .5 7.100V2.600A2.100 2.100 0 0 1 2.600.5z M3.900.6v2.100h2" fill="none" stroke="#333" stroke-width=".9" stroke-linejoin="round"/></svg>
<div style="left:447.3px;top:195.6px;width:16.8px;height:16.2px;background:#eeeff2;border-radius:2px;"></div>
<svg style="left:451.8px;top:200.4px;" width="8.4" height="6.8" viewBox="0 0 8.4 6.8"><path d="M.5 1.300a.8.8 0 0 1 .8-.8h2l.9 1h3a.8.8 0 0 1 .8.800v3.200a.8.8 0 0 1-.8.800H1.300a.8.8 0 0 1-.8-.8z M.6 2.700h7.200" fill="none" stroke="#333" stroke-width=".9" stroke-linejoin="round"/></svg>
<div style="left:472.2px;top:195.6px;width:17px;height:16.2px;background:#eeeff2;border-radius:2px;"></div>
<svg style="left:476.8px;top:200.6px;" width="7.6" height="6.6" viewBox="0 0 7.6 6.6"><path d="M2.200 1h5.200M2.200 3.200h5.200M2.200 5.400h5.200" stroke="#666" stroke-width="1"/><path d="M.2 1h1.100M.2 3.200h1.100M.2 5.400h1.100" stroke="#666" stroke-width="1"/></svg>
<svg style="left:497px;top:200.4px;" width="7.4" height="7" viewBox="0 0 7.4 7"><g fill="none" stroke="#444" stroke-width=".85"><rect x=".5" y=".5" width="2.500" height="2.400" rx=".7"/><rect x="4.300" y=".5" width="2.500" height="2.400" rx=".7"/><rect x=".5" y="4" width="2.500" height="2.400" rx=".7"/><rect x="4.300" y="4" width="2.500" height="2.400" rx=".7"/></g></svg>
<div style="left:516px;top:195.6px;width:17px;height:16.2px;background:#eeeff2;border-radius:2px;"></div>
<svg style="left:520.6px;top:200.8px;" width="8.4" height="6.6" viewBox="0 0 8.4 6.6"><rect x=".5" y=".5" width="7.400" height="5.500" rx=".8" fill="none" stroke="#333" stroke-width=".9" stroke-linejoin="round"/><path d="M5.300.6v5.400" fill="none" stroke="#333" stroke-width=".9" stroke-linejoin="round"/></svg>
<div style="left:541.5px;top:197px;width:81px;height:13.8px;background:#fff;border:1px solid #f4f4f6;border-bottom:1.300px solid #c8c8cc;border-radius:2px;"></div>
<span id="t55" class="t" style="top:199.31px;font-size:7.2px;line-height:10.8px;color:#c4c4c8;left:548px;transform-origin:0 50%;transform:scaleX(0.9312);">検索</span>
<svg style="left:613.2px;top:201.2px;" width="5.6" height="5.4" viewBox="0 0 5.6 5.4"><circle cx="3.400" cy="2.100" r="1.600" fill="none" stroke="#555" stroke-width=".95"/><path d="M2.200 3.300L.5 5" stroke="#555" stroke-width="1.050"/></svg>
<div style="left:636px;top:203.5px;width:5px;height:0.9px;background:#555;"></div>
<div style="left:659.5px;top:200.4px;width:6.4px;height:6.4px;background:transparent;border:.8px solid #333;"></div>
<svg style="left:683.8px;top:200.5px;" width="6.4" height="6.4" viewBox="0 0 6.4 6.4"><path d="M.3.3L6.1 6.1M6.1.3L.3 6.1" stroke="#222" stroke-width=".9"/></svg>
</div><div class="filters" style="left:0;top:0;width:700px;height:537px">
<div style="left:210px;top:215px;width:489px;height:79px;background:#fafafb;"></div>
<div style="left:210px;top:290.5px;width:489px;height:4px;background:linear-gradient(180deg,#fafafb,#eeeeef);"></div>
<span id="t56" class="t" style="top:227px;font-size:13.6px;line-height:20.4px;color:#151515;font-weight:700;left:223.3px;transform-origin:0 50%;transform:scaleX(0.9857);">写真</span>
<span id="t57" class="t" style="top:246.76px;font-size:10px;line-height:15px;color:#7d7d7d;left:223.5px;transform-origin:0 50%;transform:scaleX(0.9956);">3.44 GB<span style="display:inline-block;transform:scaleX(0.74);transform-origin:0 50%;margin-right:-0.260em">に</span>6934<span style="display:inline-block;transform:scaleX(0.74);transform-origin:0 50%;margin-right:-1.300em">のファイル</span></span>
<div style="left:223px;top:272px;width:44px;height:13.2px;background:#ecedf1;border-radius:2px;"></div>
<svg style="left:228px;top:275.6px;" width="6.6" height="6" viewBox="0 0 6.6 6"><path d="M0 .8h6.400M0 3h6.400M0 5.200h6.400" stroke="#444" stroke-width=".8"/><path d="M1.300 0v1.600M4.500 2.200v1.600M2.400 4.400v1.600" stroke="#444" stroke-width=".9"/></svg>
<span id="t58" class="t" style="top:274.44px;font-size:7.2px;line-height:10.8px;color:#333;left:238.2px;transform-origin:0 50%;transform:scaleX(0.8756);">表示</span>
<svg style="left:255.4px;top:276.6px;" width="6" height="4" viewBox="0 0 6 4"><path d="M.4.5L3 3.100 5.600.5" fill="none" stroke="#333" stroke-width=".9"/></svg>
<div style="left:279px;top:272px;width:46.8px;height:13.2px;background:#d6e8fa;border-radius:2px;"></div>
<svg style="left:284px;top:275px;" width="8.6" height="7.3" viewBox="0 0 8.6 7.3"><rect x=".5" y=".5" width="7.6" height="6.3" rx=".9" fill="none" stroke="#1669d6" stroke-width="1"/><path d="M.8 6.5l2.2-2.6 1.5 1.5 1.3-1.2 2 2.3z" fill="#1669d6"/><circle cx="5.9" cy="2.4" r=".7" fill="#1669d6"/></svg>
<span id="t59" class="t" style="top:274.44px;font-size:7.2px;line-height:10.8px;color:#1669d6;left:296.3px;transform-origin:0 50%;transform:scaleX(0.9173);">写真</span>
<svg style="left:315.4px;top:275.8px;" width="5.6" height="5.6" viewBox="0 0 5.6 5.6"><path d="M.4.400L5.200 5.200M5.200.4L.4 5.200" stroke="#1669d6" stroke-width=".9"/></svg>
<div style="left:330.8px;top:272px;width:57.4px;height:13.2px;background:#ecedf1;border-radius:2px;"></div>
<svg style="left:335px;top:274.6px;" width="6.4" height="8" viewBox="0 0 6.4 8"><path d="M1.200.5h2.400l2.200 2.200v4a.7.7 0 0 1-.7.700H1.200a.7.7 0 0 1-.7-.7V1.200a.7.7 0 0 1 .7-.7z M3.500.6v2.200h2.200M1.900 5.300h2.400" fill="none" stroke="#333" stroke-width=".85" stroke-linejoin="round"/></svg>
<span id="t60" class="t" style="top:274.21px;font-size:7.2px;line-height:10.8px;color:#333;left:345px;transform-origin:0 50%;transform:scaleX(1.0234);"><span style="display:inline-block;transform:scaleX(0.74);transform-origin:0 50%;margin-right:-1.040em">ファイル</span> <span style="display:inline-block;transform:scaleX(0.74);transform-origin:0 50%;margin-right:-0.780em">サイズ</span></span>
<div style="left:391.4px;top:272px;width:81.4px;height:13.2px;background:#ecedf1;border-radius:2px;"></div>
<svg style="left:396px;top:275.2px;" width="7" height="6.6" viewBox="0 0 7 6.6"><rect x=".5" y=".6" width="6" height="5.400" rx=".8" fill="none" stroke="#333" stroke-width=".85"/><path d="M.6 1.700h5.800" stroke="#333" stroke-width="1.500"/></svg>
<span id="t61" class="t" style="top:274.24px;font-size:7.2px;line-height:10.8px;color:#333;left:407px;transform-origin:0 50%;transform:scaleX(1.0044);">日付<span style="display:inline-block;transform:scaleX(0.74);transform-origin:0 50%;margin-right:-0.260em">が</span>変更<span style="display:inline-block;transform:scaleX(0.74);transform-origin:0 50%;margin-right:-1.300em">されました</span></span>
<div style="left:477px;top:272px;width:60.7px;height:13.2px;background:#ecedf1;border-radius:2px;"></div>
<svg style="left:481px;top:274.6px;" width="8" height="7.6" viewBox="0 0 8 7.6"><path d="M3.600.5l.95 2.100 2.250.25-1.700 1.500.5 2.250L3.600 5.500 1.600 6.600l.5-2.250L.4 2.850l2.250-.25z" fill="#333"/><path d="M5.600 5.200l1.700 1.700" stroke="#333" stroke-width=".9"/></svg>
<span id="t62" class="t" style="top:274.19px;font-size:7.2px;line-height:10.8px;color:#333;left:493px;transform-origin:0 50%;transform:scaleX(0.9796);">回復<span style="display:inline-block;transform:scaleX(0.74);transform-origin:0 50%;margin-right:-1.300em">のチャンス</span></span>
<span id="t63" class="t" style="top:272.94px;font-size:7.5px;line-height:11.25px;color:#1669d6;font-weight:500;left:650.6px;transform-origin:0 50%;transform:scaleX(0.9674);"><span style="display:inline-block;transform:scaleX(0.74);transform-origin:0 50%;margin-right:-1.820em">すべてリセット</span></span>
</div><div class="file-list" style="left:0;top:0;width:700px;height:537px">
<div style="left:221.7px;top:301.2px;width:11px;height:11px;background:#fff;border:1px solid #c4c4c7;border-radius:2.500px;"></div>
<div style="left:237px;top:300px;width:0.8px;height:13.4px;background:#f0f0f2;"></div>
<span id="t64" class="t" style="top:300.84px;font-size:7.4px;line-height:11.1px;color:#1a1a1a;font-weight:700;left:241.4px;transform-origin:0 50%;transform:scaleX(0.9461);">名前</span>
<svg style="left:362.4px;top:302.8px;" width="4" height="7" viewBox="0 0 4 7"><path d="M2 .3v6M.4 4.600L2 6.300 3.600 4.600" fill="none" stroke="#777" stroke-width=".7"/></svg>
<div style="left:371px;top:300px;width:0.8px;height:13.4px;background:#ededf0;"></div>
<div style="left:437.3px;top:300px;width:0.8px;height:13.4px;background:#ededf0;"></div>
<div style="left:498.7px;top:300px;width:0.8px;height:13.4px;background:#ededf0;"></div>
<div style="left:533.6px;top:300px;width:0.8px;height:13.4px;background:#ededf0;"></div>
<span id="t65" class="t" style="top:300.5px;font-size:7.4px;line-height:11.1px;color:#1a1a1a;font-weight:700;left:376.6px;transform-origin:0 50%;transform:scaleX(0.9957);">回復<span style="display:inline-block;transform:scaleX(0.74);transform-origin:0 50%;margin-right:-1.300em">のチャンス</span></span>
<span id="t66" class="t" style="top:300.54px;font-size:7.4px;line-height:11.1px;color:#1a1a1a;font-weight:700;left:443.6px;transform-origin:0 50%;transform:scaleX(0.9578);">日付<span style="display:inline-block;transform:scaleX(0.74);transform-origin:0 50%;margin-right:-0.260em">が</span>変更<span style="display:inline-block;transform:scaleX(0.74);transform-origin:0 50%;margin-right:-0.520em">され</span>...</span>
<span id="t67" class="t" style="top:300.64px;font-size:7.4px;line-height:11.1px;color:#1a1a1a;font-weight:700;left:504px;transform-origin:0 50%;transform:scaleX(0.9394);">種類</span>
<div style="left:539px;top:300px;width:14.8px;height:13px;background:transparent;overflow:hidden;"><span class="t" style="left:0;top:.7px;font-size:7.400px;line-height:11.100px;font-weight:700;color:#1a1a1a;transform-origin:0 50%;transform:scaleX(.77)">サイズ</span></div>
<div style="left:217px;top:316px;width:337px;height:0.8px;background:#e9ebee;"></div>
<div style="left:221.4px;top:320px;width:10.4px;height:10.4px;background:#fff;border:1px solid #c4c4c7;border-radius:2.500px;"></div>
<svg style="left:260px;top:320.2px;" width="8.8" height="10" viewBox="0 0 8.8 10"><path d="M1.200.4h4.400l2.800 2.800v5.600a.8.800 0 0 1-.8.800H1.200a.8.800 0 0 1-.8-.8V1.200a.8.800 0 0 1 .8-.8z" fill="#fff" stroke="#a39e9c" stroke-width=".85"/><path d="M5.500.5v2.800h2.800" fill="none" stroke="#a9a9ad" stroke-width=".6"/><rect x="2" y="3.300" width="4.400" height="4.400" rx="1.700" fill="#1d6cd8"/><circle cx="4.200" cy="5.500" r=".85" fill="#a9cbf4"/></svg>
<span id="t68" class="t" style="top:320.26px;font-size:7px;line-height:10.5px;color:#303030;-webkit-text-stroke:0.1px #303030;left:275.6px;transform-origin:0 50%;transform:scaleX(0.8598);">2019_0413_041_pic_abc.JPG</span>
<span id="t69" class="t" style="top:320.11px;font-size:6.8px;line-height:10.2px;color:#868686;left:387.3px;transform-origin:0 50%;transform:scaleX(0.7401);">待<span style="display:inline-block;transform:scaleX(0.88);transform-origin:0 50%;margin-right:-0.480em">っている</span>...</span>
<span id="t70" class="t" style="top:320.73px;font-size:6.8px;line-height:10.2px;color:#868686;left:443.6px;transform-origin:0 50%;transform:scaleX(0.8900);">2019/04/13 16:04</span>
<span id="t71" class="t" style="top:320.72px;font-size:6.8px;line-height:10.2px;color:#868686;left:504px;transform-origin:0 50%;transform:scaleX(0.7913);">JPEG Im...</span>
<span id="t72" class="t" style="top:320.48px;font-size:6.8px;line-height:10.2px;color:#868686;left:539px;transform-origin:0 50%;transform:scaleX(0.9256);">4..</span>
<div style="left:217px;top:333.7px;width:337px;height:16.4px;background:#ddeefb;border-radius:2px;"></div>
<div style="left:221.4px;top:336.7px;width:10.4px;height:10.4px;background:#fff;border:1px solid #c4c4c7;border-radius:2.500px;"></div>
<svg style="left:260px;top:336.9px;" width="8.8" height="10" viewBox="0 0 8.8 10"><path d="M1.200.4h4.400l2.800 2.800v5.600a.8.800 0 0 1-.8.800H1.200a.8.800 0 0 1-.8-.8V1.200a.8.800 0 0 1 .8-.8z" fill="#fff" stroke="#a39e9c" stroke-width=".85"/><path d="M5.500.5v2.800h2.800" fill="none" stroke="#a9a9ad" stroke-width=".6"/><rect x="2" y="3.300" width="4.400" height="4.400" rx="1.700" fill="#1d6cd8"/><circle cx="4.200" cy="5.500" r=".85" fill="#a9cbf4"/></svg>
<span id="t73" class="t" style="top:336.59px;font-size:7px;line-height:10.5px;color:#303030;-webkit-text-stroke:0.1px #303030;left:275.6px;transform-origin:0 50%;transform:scaleX(0.8667);">2019_0502_068_pic_a...</span>
<span id="t74" class="t" style="top:336.92px;font-size:6.8px;line-height:10.2px;color:#868686;left:387.3px;transform-origin:0 50%;transform:scaleX(0.7401);">待<span style="display:inline-block;transform:scaleX(0.88);transform-origin:0 50%;margin-right:-0.480em">っている</span>...</span>
<span id="t75" class="t" style="top:337.16px;font-size:6.8px;line-height:10.2px;color:#868686;left:443.6px;transform-origin:0 50%;transform:scaleX(0.8900);">2019/05/02 16:03</span>
<span id="t76" class="t" style="top:337.12px;font-size:6.8px;line-height:10.2px;color:#868686;left:504px;transform-origin:0 50%;transform:scaleX(0.7913);">JPEG Im...</span>
<span id="t77" class="t" style="top:336.88px;font-size:6.8px;line-height:10.2px;color:#868686;left:539px;transform-origin:0 50%;transform:scaleX(0.9256);">4..</span>
<svg style="left:348.3px;top:338.4px;" width="7.4" height="7.4" viewBox="0 0 7.4 7.4"><circle cx="3.700" cy="3.700" r="3.700" fill="#565656"/><ellipse cx="3.700" cy="3.700" rx="2.300" ry="1.500" fill="#ddeefb"/><circle cx="3.700" cy="3.700" r=".9" fill="#565656"/></svg>
<svg style="left:358.7px;top:338.4px;" width="7.4" height="7.4" viewBox="0 0 7.4 7.4"><circle cx="3.700" cy="3.700" r="3.700" fill="#565656"/><rect x="2" y="2.100" width="3.400" height="3.200" rx=".6" fill="#ddeefb"/><path d="M2 3.700h3.400" stroke="#565656" stroke-width=".6"/></svg>
<div style="left:221.4px;top:353.4px;width:10.4px;height:10.4px;background:#fff;border:1px solid #c4c4c7;border-radius:2.500px;"></div>
<svg style="left:260px;top:353.6px;" width="8.8" height="10" viewBox="0 0 8.8 10"><path d="M1.200.4h4.400l2.800 2.800v5.600a.8.800 0 0 1-.8.800H1.200a.8.800 0 0 1-.8-.8V1.200a.8.800 0 0 1 .8-.8z" fill="#fff" stroke="#a39e9c" stroke-width=".85"/><path d="M5.500.5v2.800h2.800" fill="none" stroke="#a9a9ad" stroke-width=".6"/><rect x="2" y="3.300" width="4.400" height="4.400" rx="1.700" fill="#1d6cd8"/><circle cx="4.200" cy="5.500" r=".85" fill="#a9cbf4"/></svg>
<span id="t78" class="t" style="top:353.9px;font-size:7px;line-height:10.5px;color:#303030;-webkit-text-stroke:0.1px #303030;left:275.6px;transform-origin:0 50%;transform:scaleX(0.8830);">2019_0502_070_pic_abc.jpg</span>
<span id="t79" class="t" style="top:353.89px;font-size:6.8px;line-height:10.2px;color:#868686;left:387.3px;transform-origin:0 50%;transform:scaleX(0.7401);">待<span style="display:inline-block;transform:scaleX(0.88);transform-origin:0 50%;margin-right:-0.480em">っている</span>...</span>
<span id="t80" class="t" style="top:353.57px;font-size:6.8px;line-height:10.2px;color:#868686;left:443.6px;transform-origin:0 50%;transform:scaleX(0.8900);">2019/05/02 16:05</span>
<span id="t81" class="t" style="top:353.52px;font-size:6.8px;line-height:10.2px;color:#868686;left:504px;transform-origin:0 50%;transform:scaleX(0.7913);">JPEG Im...</span>
<span id="t82" class="t" style="top:353.83px;font-size:6.8px;line-height:10.2px;color:#868686;left:539px;transform-origin:0 50%;transform:scaleX(0.9256);">4..</span>
<div style="left:221.4px;top:370.1px;width:10.4px;height:10.4px;background:#fff;border:1px solid #c4c4c7;border-radius:2.500px;"></div>
<svg style="left:260px;top:370.3px;" width="8.8" height="10" viewBox="0 0 8.8 10"><path d="M1.200.4h4.400l2.800 2.800v5.600a.8.800 0 0 1-.8.800H1.200a.8.800 0 0 1-.8-.8V1.200a.8.800 0 0 1 .8-.8z" fill="#fff" stroke="#a39e9c" stroke-width=".85"/><path d="M5.500.5v2.800h2.800" fill="none" stroke="#a9a9ad" stroke-width=".6"/><rect x="2" y="3.300" width="4.400" height="4.400" rx="1.700" fill="#1d6cd8"/><circle cx="4.200" cy="5.500" r=".85" fill="#a9cbf4"/></svg>
<span id="t83" class="t" style="top:370.48px;font-size:7px;line-height:10.5px;color:#303030;-webkit-text-stroke:0.1px #303030;left:275.6px;transform-origin:0 50%;transform:scaleX(0.8598);">2019_0502_106_pic_abc.JPG</span>
<span id="t84" class="t" style="top:370.72px;font-size:6.8px;line-height:10.2px;color:#868686;left:387.3px;transform-origin:0 50%;transform:scaleX(0.7401);">待<span style="display:inline-block;transform:scaleX(0.88);transform-origin:0 50%;margin-right:-0.480em">っている</span>...</span>
<span id="t85" class="t" style="top:370.93px;font-size:6.8px;line-height:10.2px;color:#868686;left:443.6px;transform-origin:0 50%;transform:scaleX(0.8985);">2019/05/02 11:18</span>
<span id="t86" class="t" style="top:370.92px;font-size:6.8px;line-height:10.2px;color:#868686;left:504px;transform-origin:0 50%;transform:scaleX(0.7913);">JPEG Im...</span>
<span id="t87" class="t" style="top:370.32px;font-size:6.8px;line-height:10.2px;color:#868686;left:539px;transform-origin:0 50%;transform:scaleX(0.9256);">4..</span>
<div style="left:221.4px;top:386.8px;width:10.4px;height:10.4px;background:#fff;border:1px solid #c4c4c7;border-radius:2.500px;"></div>
<svg style="left:260px;top:387px;" width="8.8" height="10" viewBox="0 0 8.8 10"><path d="M1.200.4h4.400l2.800 2.800v5.600a.8.800 0 0 1-.8.800H1.200a.8.800 0 0 1-.8-.8V1.200a.8.800 0 0 1 .8-.8z" fill="#fff" stroke="#a39e9c" stroke-width=".85"/><path d="M5.500.5v2.800h2.800" fill="none" stroke="#a9a9ad" stroke-width=".6"/><rect x="2" y="3.300" width="4.400" height="4.400" rx="1.700" fill="#1d6cd8"/><circle cx="4.200" cy="5.500" r=".85" fill="#a9cbf4"/></svg>
<span id="t88" class="t" style="top:386.88px;font-size:7px;line-height:10.5px;color:#303030;-webkit-text-stroke:0.1px #303030;left:275.6px;transform-origin:0 50%;transform:scaleX(0.8598);">2019_0502_148_pic_abc.JPG</span>
<span id="t89" class="t" style="top:387.12px;font-size:6.8px;line-height:10.2px;color:#868686;left:387.3px;transform-origin:0 50%;transform:scaleX(0.7401);">待<span style="display:inline-block;transform:scaleX(0.88);transform-origin:0 50%;margin-right:-0.480em">っている</span>...</span>
<span id="t90" class="t" style="top:387.34px;font-size:6.8px;line-height:10.2px;color:#868686;left:443.6px;transform-origin:0 50%;transform:scaleX(0.8985);">2019/05/02 11:38</span>
<span id="t91" class="t" style="top:387.32px;font-size:6.8px;line-height:10.2px;color:#868686;left:504px;transform-origin:0 50%;transform:scaleX(0.7913);">JPEG Im...</span>
<span id="t92" class="t" style="top:387.08px;font-size:6.8px;line-height:10.2px;color:#868686;left:539px;transform-origin:0 50%;transform:scaleX(0.9256);">4..</span>
<div style="left:221.4px;top:403.5px;width:10.4px;height:10.4px;background:#fff;border:1px solid #c4c4c7;border-radius:2.500px;"></div>
<svg style="left:260px;top:403.7px;" width="8.8" height="10" viewBox="0 0 8.8 10"><path d="M1.200.4h4.400l2.800 2.800v5.600a.8.800 0 0 1-.8.800H1.200a.8.800 0 0 1-.8-.8V1.200a.8.800 0 0 1 .8-.8z" fill="#fff" stroke="#a39e9c" stroke-width=".85"/><path d="M5.500.5v2.800h2.800" fill="none" stroke="#a9a9ad" stroke-width=".6"/><rect x="2" y="3.300" width="4.400" height="4.400" rx="1.700" fill="#1d6cd8"/><circle cx="4.200" cy="5.500" r=".85" fill="#a9cbf4"/></svg>
<span id="t93" class="t" style="top:404.3px;font-size:7px;line-height:10.5px;color:#303030;-webkit-text-stroke:0.1px #303030;left:275.6px;transform-origin:0 50%;transform:scaleX(0.8598);">2019_0717_022_pic_abc.JPG</span>
<span id="t94" class="t" style="top:403.52px;font-size:6.8px;line-height:10.2px;color:#868686;left:387.3px;transform-origin:0 50%;transform:scaleX(0.7401);">待<span style="display:inline-block;transform:scaleX(0.88);transform-origin:0 50%;margin-right:-0.480em">っている</span>...</span>
<span id="t95" class="t" style="top:403.81px;font-size:6.8px;line-height:10.2px;color:#868686;left:443.6px;transform-origin:0 50%;transform:scaleX(0.8900);">2019/07/17 12:04</span>
<span id="t96" class="t" style="top:403.72px;font-size:6.8px;line-height:10.2px;color:#868686;left:504px;transform-origin:0 50%;transform:scaleX(0.7913);">JPEG Im...</span>
<span id="t97" class="t" style="top:404.1px;font-size:6.8px;line-height:10.2px;color:#868686;left:539px;transform-origin:0 50%;transform:scaleX(0.9256);">4..</span>
<div style="left:221.4px;top:420.2px;width:10.4px;height:10.4px;background:#fff;border:1px solid #c4c4c7;border-radius:2.500px;"></div>
<svg style="left:260px;top:420.4px;" width="8.8" height="10" viewBox="0 0 8.8 10"><path d="M1.200.4h4.400l2.800 2.800v5.600a.8.800 0 0 1-.8.800H1.200a.8.800 0 0 1-.8-.8V1.200a.8.800 0 0 1 .8-.8z" fill="#fff" stroke="#a39e9c" stroke-width=".85"/><path d="M5.500.5v2.800h2.800" fill="none" stroke="#a9a9ad" stroke-width=".6"/><rect x="2" y="3.300" width="4.400" height="4.400" rx="1.700" fill="#1d6cd8"/><circle cx="4.200" cy="5.500" r=".85" fill="#a9cbf4"/></svg>
<span id="t98" class="t" style="top:420.7px;font-size:7px;line-height:10.5px;color:#303030;-webkit-text-stroke:0.1px #303030;left:275.6px;transform-origin:0 50%;transform:scaleX(0.8598);">2019_0717_024_pic_abc.JPG</span>
<span id="t99" class="t" style="top:420.92px;font-size:6.8px;line-height:10.2px;color:#868686;left:387.3px;transform-origin:0 50%;transform:scaleX(0.7401);">待<span style="display:inline-block;transform:scaleX(0.88);transform-origin:0 50%;margin-right:-0.480em">っている</span>...</span>
<span id="t100" class="t" style="top:421.21px;font-size:6.8px;line-height:10.2px;color:#868686;left:443.6px;transform-origin:0 50%;transform:scaleX(0.8900);">2019/07/17 12:06</span>
<span id="t101" class="t" style="top:421.12px;font-size:6.8px;line-height:10.2px;color:#868686;left:504px;transform-origin:0 50%;transform:scaleX(0.7913);">JPEG Im...</span>
<span id="t102" class="t" style="top:420.88px;font-size:6.8px;line-height:10.2px;color:#868686;left:539px;transform-origin:0 50%;transform:scaleX(0.9256);">4..</span>
<div style="left:221.4px;top:436.9px;width:10.4px;height:10.4px;background:#fff;border:1px solid #c4c4c7;border-radius:2.500px;"></div>
<svg style="left:260px;top:437.1px;" width="8.8" height="10" viewBox="0 0 8.8 10"><path d="M1.200.4h4.400l2.800 2.800v5.600a.8.800 0 0 1-.8.800H1.200a.8.800 0 0 1-.8-.8V1.200a.8.800 0 0 1 .8-.8z" fill="#fff" stroke="#a39e9c" stroke-width=".85"/><path d="M5.500.5v2.800h2.800" fill="none" stroke="#a9a9ad" stroke-width=".6"/><rect x="2" y="3.300" width="4.400" height="4.400" rx="1.700" fill="#1d6cd8"/><circle cx="4.200" cy="5.500" r=".85" fill="#a9cbf4"/></svg>
<span id="t103" class="t" style="top:437.1px;font-size:7px;line-height:10.5px;color:#303030;-webkit-text-stroke:0.1px #303030;left:275.6px;transform-origin:0 50%;transform:scaleX(0.8598);">2019_0717_028_pic_abc.JPG</span>
<span id="t104" class="t" style="top:437.32px;font-size:6.8px;line-height:10.2px;color:#868686;left:387.3px;transform-origin:0 50%;transform:scaleX(0.7401);">待<span style="display:inline-block;transform:scaleX(0.88);transform-origin:0 50%;margin-right:-0.480em">っている</span>...</span>
<span id="t105" class="t" style="top:437.6px;font-size:6.8px;line-height:10.2px;color:#868686;left:443.6px;transform-origin:0 50%;transform:scaleX(0.8900);">2019/07/17 12:26</span>
<span id="t106" class="t" style="top:437.52px;font-size:6.8px;line-height:10.2px;color:#868686;left:504px;transform-origin:0 50%;transform:scaleX(0.7913);">JPEG Im...</span>
<span id="t107" class="t" style="top:437.28px;font-size:6.8px;line-height:10.2px;color:#868686;left:539px;transform-origin:0 50%;transform:scaleX(0.9256);">4..</span>
<div style="left:221.4px;top:453.6px;width:10.4px;height:10.4px;background:#fff;border:1px solid #c4c4c7;border-radius:2.500px;"></div>
<svg style="left:260px;top:453.8px;" width="8.8" height="10" viewBox="0 0 8.8 10"><path d="M1.200.4h4.400l2.800 2.800v5.600a.8.800 0 0 1-.8.800H1.200a.8.800 0 0 1-.8-.8V1.200a.8.800 0 0 1 .8-.8z" fill="#fff" stroke="#a39e9c" stroke-width=".85"/><path d="M5.500.5v2.800h2.800" fill="none" stroke="#a9a9ad" stroke-width=".6"/><rect x="2" y="3.300" width="4.400" height="4.400" rx="1.700" fill="#1d6cd8"/><circle cx="4.200" cy="5.500" r=".85" fill="#a9cbf4"/></svg>
<span id="t108" class="t" style="top:453.5px;font-size:7px;line-height:10.5px;color:#303030;-webkit-text-stroke:0.1px #303030;left:275.6px;transform-origin:0 50%;transform:scaleX(0.8598);">2019_0717_034_pic_abc.JPG</span>
<span id="t109" class="t" style="top:453.72px;font-size:6.8px;line-height:10.2px;color:#868686;left:387.3px;transform-origin:0 50%;transform:scaleX(0.7401);">待<span style="display:inline-block;transform:scaleX(0.88);transform-origin:0 50%;margin-right:-0.480em">っている</span>...</span>
<span id="t110" class="t" style="top:454.05px;font-size:6.8px;line-height:10.2px;color:#868686;left:443.6px;transform-origin:0 50%;transform:scaleX(0.8900);">2019/07/17 12:37</span>
<span id="t111" class="t" style="top:453.92px;font-size:6.8px;line-height:10.2px;color:#868686;left:504px;transform-origin:0 50%;transform:scaleX(0.7913);">JPEG Im...</span>
<span id="t112" class="t" style="top:453.68px;font-size:6.8px;line-height:10.2px;color:#868686;left:539px;transform-origin:0 50%;transform:scaleX(0.9256);">4..</span>
<div style="left:221.4px;top:470.3px;width:10.4px;height:10.4px;background:#fff;border:1px solid #c4c4c7;border-radius:2.500px;"></div>
<svg style="left:260px;top:470.5px;" width="8.8" height="10" viewBox="0 0 8.8 10"><path d="M1.200.4h4.400l2.800 2.800v5.600a.8.800 0 0 1-.8.800H1.200a.8.800 0 0 1-.8-.8V1.200a.8.800 0 0 1 .8-.8z" fill="#fff" stroke="#a39e9c" stroke-width=".85"/><path d="M5.500.5v2.800h2.800" fill="none" stroke="#a9a9ad" stroke-width=".6"/><rect x="2" y="3.300" width="4.400" height="4.400" rx="1.700" fill="#1d6cd8"/><circle cx="4.200" cy="5.500" r=".85" fill="#a9cbf4"/></svg>
<span id="t113" class="t" style="top:470.91px;font-size:7px;line-height:10.5px;color:#303030;-webkit-text-stroke:0.1px #303030;left:275.6px;transform-origin:0 50%;transform:scaleX(0.8598);">2019_0717_039_pic_abc.JPG</span>
<span id="t114" class="t" style="top:471.12px;font-size:6.8px;line-height:10.2px;color:#868686;left:387.3px;transform-origin:0 50%;transform:scaleX(0.7401);">待<span style="display:inline-block;transform:scaleX(0.88);transform-origin:0 50%;margin-right:-0.480em">っている</span>...</span>
<span id="t115" class="t" style="top:471.42px;font-size:6.8px;line-height:10.2px;color:#868686;left:443.6px;transform-origin:0 50%;transform:scaleX(0.8900);">2019/07/17 12:39</span>
<span id="t116" class="t" style="top:471.32px;font-size:6.8px;line-height:10.2px;color:#868686;left:504px;transform-origin:0 50%;transform:scaleX(0.7913);">JPEG Im...</span>
<span id="t117" class="t" style="top:471.08px;font-size:6.8px;line-height:10.2px;color:#868686;left:539px;transform-origin:0 50%;transform:scaleX(0.9256);">4..</span>
<div style="left:221.4px;top:487px;width:10.4px;height:10.4px;background:#fff;border:1px solid #c4c4c7;border-radius:2.500px;"></div>
<svg style="left:260px;top:487.2px;" width="8.8" height="10" viewBox="0 0 8.8 10"><path d="M1.200.4h4.400l2.800 2.800v5.600a.8.800 0 0 1-.8.800H1.200a.8.800 0 0 1-.8-.8V1.200a.8.800 0 0 1 .8-.8z" fill="#fff" stroke="#a39e9c" stroke-width=".85"/><path d="M5.500.5v2.800h2.800" fill="none" stroke="#a9a9ad" stroke-width=".6"/><rect x="2" y="3.300" width="4.400" height="4.400" rx="1.700" fill="#1d6cd8"/><circle cx="4.200" cy="5.500" r=".85" fill="#a9cbf4"/></svg>
<span id="t118" class="t" style="top:487.31px;font-size:7px;line-height:10.5px;color:#303030;-webkit-text-stroke:0.1px #303030;left:275.6px;transform-origin:0 50%;transform:scaleX(0.9139);">2020-06-19_09h56_12.png</span>
<span id="t119" class="t" style="top:487.11px;font-size:6.8px;line-height:10.2px;color:#868686;left:387.3px;transform-origin:0 50%;transform:scaleX(0.7401);">待<span style="display:inline-block;transform:scaleX(0.88);transform-origin:0 50%;margin-right:-0.480em">っている</span>...</span>
<span id="t120" class="t" style="top:487.82px;font-size:6.8px;line-height:10.2px;color:#868686;left:443.6px;transform-origin:0 50%;transform:scaleX(0.8954);">2020/06/19 9:57</span>
<span id="t121" class="t" style="top:487.74px;font-size:6.8px;line-height:10.2px;color:#868686;left:504px;transform-origin:0 50%;transform:scaleX(0.8209);">PNG Im...</span>
<span id="t122" class="t" style="top:487.6px;font-size:6.8px;line-height:10.2px;color:#868686;left:539px;transform-origin:0 50%;transform:scaleX(0.9256);">5..</span>
<div style="left:217px;top:500px;width:337px;height:7.6px;background:transparent;overflow:hidden;"><div style="left:5px;top:4.600px;width:10px;height:10px;border:1px solid #c6c6c8;border-radius:2px"></div><div style="left:43.300px;top:4.400px;width:8px;height:10px;border:.7px solid #a9a9ad;border-radius:1px 2.500px 1px 1px"></div></div>
<div style="left:557.2px;top:428.4px;width:1.6px;height:6.4px;background:#c6c6ca;border-radius:.8px;"></div>
</div><div class="preview" style="left:0;top:0;width:700px;height:537px">
<div style="left:562px;top:294.5px;width:0.8px;height:216px;background:#eef0f3;"></div>
<svg style="left:686.6px;top:299.8px;" width="7.8" height="7.8" viewBox="0 0 7.8 7.8"><path d="M3.300.9H1.500a.9.900 0 0 0-.9.900v4.500a.9.900 0 0 0 .9.900h4.500a.9.900 0 0 0 .9-.9V4.500M4.600.6h2.600v2.600M7 .8L3.600 4.200" fill="none" stroke="#444" stroke-width=".9" stroke-linejoin="round"/></svg>
<svg style="left:566px;top:321px;" width="131" height="73.6" viewBox="0 0 131 73.6"><defs>
<linearGradient id="sky" x1="0" y1="0" x2=".35" y2="1"><stop offset="0" stop-color="#5690e0"/><stop offset=".4" stop-color="#76a8e8"/><stop offset=".8" stop-color="#a2c8f0"/><stop offset="1" stop-color="#b4d4f4"/></linearGradient>
<linearGradient id="lake" x1="0" y1="0" x2="0" y2="1"><stop offset="0" stop-color="#4d7cc2"/><stop offset=".25" stop-color="#5c82b8"/><stop offset=".6" stop-color="#5f7f9a"/><stop offset="1" stop-color="#6f8fb8"/></linearGradient>
<linearGradient id="grass" x1="0" y1="0" x2="0" y2="1"><stop offset="0" stop-color="#98c646"/><stop offset="1" stop-color="#79b534"/></linearGradient>
<filter id="b0" x="-5%" y="-5%" width="110%" height="110%"><feGaussianBlur stdDeviation=".35"/></filter>
<filter id="b1" x="-10%" y="-10%" width="120%" height="120%"><feGaussianBlur stdDeviation=".7"/></filter>
<filter id="b2" x="-20%" y="-30%" width="140%" height="160%"><feGaussianBlur stdDeviation="1.7"/></filter>
<filter id="nz" x="0" y="0" width="100%" height="100%"><feTurbulence type="fractalNoise" baseFrequency=".32" numOctaves="3" seed="7"/><feColorMatrix values="0 0 0 0 0  0 0 0 0 0  0 0 0 0 0  1.500 0 0 0 -.48"/></filter>
<filter id="nz2" x="0" y="0" width="100%" height="100%"><feTurbulence type="fractalNoise" baseFrequency=".5" numOctaves="2" seed="3"/><feColorMatrix values="0 0 0 0 1  0 0 0 0 1  0 0 0 0 .7  0 1.600 0 0 -.55"/></filter>
<clipPath id="pc"><rect width="131" height="73.600"/></clipPath>
<clipPath id="mt"><path d="M-2 15.500L4 17.500 9 20 14 21.500 19 22 24 20.500 30 18 36 15 41 12.500 45 11.500 49 13 54 13.500 58 14 62 14 66 13.500 72 12 78 10.800 84 10.500 88 11 94 12 100 12.600 107 13 113 14 119 14.600 124 13.800 128 13 133 13.500V35H-2z"/></clipPath>
<clipPath id="gr"><path d="M-2 48.500L20 47.500 36 48 44 49.500 52 53 60 56.500 68 60 76 63 84 64 96 66 100 75H-2z"/></clipPath>
</defs>
<g clip-path="url(#pc)"><g filter="url(#b0)">
<rect x="-2" y="-2" width="135" height="38" fill="url(#sky)"/>
<rect x="-2" y="32" width="135" height="44" fill="#3f4d2e"/><path d="M-2 32H133V64H84L68 58 52 52 40 46-2 45z" fill="url(#lake)"/>
<g clip-path="url(#mt)">
<rect width="131" height="36" fill="#687f42"/>
<g filter="url(#b1)">
<path d="M-2 15L9 20 19 22 30 18 41 12.500 45 11.500 50 14 46 20 38 26 30 31 20 34H-2z" fill="#64765e"/>
<path d="M30 18L41 12.500 49 13 52 17 47 22 40 25 34 24z" fill="#7a755c"/>
<path d="M56 14l7 2 7 6 7 7 3 5H42l4-6 5-6z" fill="#8ca64c"/>
<path d="M66 22l6 5 4 6H58z" fill="#a2bb58"/>
<path d="M78 11l8 1 8 4 6 6 4 8 2 5H84l-4-8-4-8z" fill="#58733a"/>
<path d="M100 13l8 2 8 4 6 6 4 9h-16l-4-8z" fill="#6d8a42"/>
<path d="M104 24l6-3 7 4 4 8h-18z" fill="#8aa64c"/>
<path d="M118 15l8-1.500 7 1v20h-9l-3-9z" fill="#56703a"/>
<path d="M26 34l5-6 7-3 5 4-3 6z" fill="#7c9846"/><path d="M84 14l6 1 5 4-3 5-7-2z" fill="#7a9646"/><path d="M108 17l7 1 4 5-6 3-6-3z" fill="#7f9a48"/><path d="M90 26l6-2 6 4 2 6H88z" fill="#435a30"/>
<path d="M48 30l4-5 5-2 3 5-2 6H48z" fill="#556b3c"/>
</g>
<rect width="131" height="36" filter="url(#nz)" opacity=".38"/>
</g>
<path d="M-2 34.500Q30 36 60 34.200T133 33" fill="none" stroke="#2e4530" stroke-width="1.300" filter="url(#b1)"/>
<g filter="url(#b2)">
<rect x="-5" y="34.500" width="141" height="3.500" fill="#4878c8"/>
<ellipse cx="62" cy="45.500" rx="32" ry="6.500" fill="#48635a"/>
<ellipse cx="50" cy="50" rx="18" ry="4" fill="#4e6c58"/>
<ellipse cx="112" cy="40" rx="24" ry="3.500" fill="#6c90cc"/>
<ellipse cx="118" cy="47" rx="16" ry="3" fill="#5f82b4"/>
</g>
<g filter="url(#b1)">
<path d="M-2 44L16 43.500 30 44 38 46 44 49 20 50 -2 50z" fill="#8c8a72"/>
<path d="M28 44l10 1 6 3-8 .5z" fill="#5c5a48"/>
</g>
<g clip-path="url(#gr)">
<rect y="45" width="131" height="30" fill="url(#grass)"/>
<rect y="45" width="131" height="30" filter="url(#nz2)" opacity=".55"/>
<rect y="45" width="131" height="30" filter="url(#nz)" opacity=".3"/>
</g>
<g filter="url(#b1)">
<path d="M58 56l8 2.500 10 3 10 2.500 10 2 4 8H84l-8-6-8-5z" fill="#4a5a30"/>
<path d="M70 64l10 2 10 3 4 6H80z" fill="#6b5a40"/>
<path d="M52 52.500l8 3 10 3.500 12 3 12 2.500-.5 1.800-12-2-12-3.500-10-4z" fill="#27332c"/>
<path d="M91 75l1.500-9 3-6 4-4.500 5-3 4-2.500 5 .5 4-2 5 1 4-1.500 6 1v27z" fill="#1b261a"/>
<path d="M0 30q3-3 8-1.500 4 2 6 6 1 5-2 8H-2V31z" fill="#2f5a2c"/>
<circle cx="3.500" cy="30.500" r="3.300" fill="#e6a4c0"/><circle cx="7.500" cy="32.500" r="2" fill="#d98fb0"/><circle cx=".5" cy="35" r="2.200" fill="#cf86a6"/>
<ellipse cx="24.500" cy="36.700" rx="7" ry="3.200" fill="#e8abc4"/><ellipse cx="21" cy="38" rx="2.500" ry="1.600" fill="#d58aa8"/>
<path d="M23.800 39h1.300l.4 9h-1.600z" fill="#7b6a55"/>
<ellipse cx="13.500" cy="53.300" rx="6" ry="2" fill="#cfcabc"/><ellipse cx="15.500" cy="53.300" rx="2.600" ry="1.500" fill="#2a2a28"/><ellipse cx="9" cy="54.200" rx="2" ry="1.100" fill="#22221f"/><ellipse cx="20" cy="54" rx="2.500" ry="1.200" fill="#b5a58c"/>
</g>
<g fill="#6f8fc8" opacity=".7"><circle cx="99" cy="52" r=".6"/><circle cx="104" cy="50.500" r=".5"/><circle cx="110" cy="51.500" r=".6"/><circle cx="116" cy="50" r=".5"/><circle cx="122" cy="52" r=".6"/><circle cx="127" cy="50.500" r=".5"/><circle cx="107" cy="54" r=".5"/><circle cx="119" cy="54.500" r=".5"/></g>
</g></g></svg>
<span id="t123" class="t" style="top:407.75px;font-size:9.6px;line-height:14.4px;color:#151515;-webkit-text-stroke:0.38px #151515;left:570.9px;transform-origin:0 50%;transform:scaleX(0.9032);">2019_0502_068_pic_abc.jpg</span>
<span id="t124" class="t" style="top:422.51px;font-size:7.4px;line-height:11.1px;color:#828282;left:570.9px;transform-origin:0 50%;transform:scaleX(0.8714);">JPEG Image – 497 KB</span>
<span id="t125" class="t" style="top:435px;font-size:7.6px;line-height:11.4px;color:#828282;left:570.9px;transform-origin:0 50%;transform:scaleX(0.9042);">日付<span style="display:inline-block;transform:scaleX(0.84);transform-origin:0 50%;margin-right:-0.160em">が</span>変更<span style="display:inline-block;transform:scaleX(0.84);transform-origin:0 50%;margin-right:-0.800em">されました</span> 2019/05/02 1...</span>
<span id="t126" class="t" style="top:454.98px;font-size:7.6px;line-height:11.4px;color:#1a1a1a;font-weight:700;left:570.9px;transform-origin:0 50%;transform:scaleX(1.0143);"><span style="display:inline-block;transform:scaleX(0.74);transform-origin:0 50%;margin-right:-0.520em">パス</span></span>
<span id="t127" class="t" style="top:463.63px;font-size:6.4px;line-height:9.6px;color:#828282;left:570.9px;transform-origin:0 50%;transform:scaleX(0.9484);">¥既存¥New Volume¥<span style="display:inline-block;transform:scaleX(0.74);transform-origin:0 50%;margin-right:-2.340em">カスタマイズテスト</span></span>
<span id="t128" class="t" style="top:472.15px;font-size:6.4px;line-height:9.6px;color:#828282;left:570.9px;transform-origin:0 50%;transform:scaleX(0.8896);">¥2019_0502_068_pic_abc.jpg</span>
<span id="t129" class="t" style="top:491.45px;font-size:7.6px;line-height:11.4px;color:#1a1a1a;font-weight:700;left:570.9px;transform-origin:0 50%;transform:scaleX(0.9508);">回復<span style="display:inline-block;transform:scaleX(0.74);transform-origin:0 50%;margin-right:-1.300em">のチャンス</span></span>
<span id="t130" class="t" style="top:499.09px;font-size:7.4px;line-height:11.1px;color:#828282;left:570.9px;transform-origin:0 50%;transform:scaleX(0.9004);">待<span style="display:inline-block;transform:scaleX(0.74);transform-origin:0 50%;margin-right:-1.040em">っている</span>...</span>
<div style="left:693.2px;top:411px;width:2.8px;height:90px;background:#bcbcc0;border-radius:1.400px;"></div>
</div><div class="statusbar" style="left:0;top:0;width:700px;height:537px">
<div style="left:210px;top:510.8px;width:489px;height:23.2px;background:#fbfbfc;"></div>
<div style="left:210px;top:510.6px;width:489px;height:0.8px;background:#e9ebee;"></div>
<span id="t131" class="t" style="top:519.38px;font-size:7px;line-height:10.5px;color:#858585;left:220.3px;transform-origin:0 50%;transform:scaleX(1.0086);">0h29m 経過, 残<span style="display:inline-block;transform:scaleX(0.74);transform-origin:0 50%;margin-right:-0.260em">り</span> ~0h32m<span style="display:inline-block;transform:scaleX(0.74);transform-origin:0 50%;margin-right:-1.300em">、ブロック</span> 431411899 / 906255038</span>
<div style="left:640px;top:516px;width:54.4px;height:15.2px;background:#1a7bf2;border-radius:2px;"></div>
<span id="t132" class="t" style="top:518.6px;font-size:7.7px;line-height:11.55px;color:#fff;font-weight:500;left:651.2px;transform-origin:0 50%;transform:scaleX(1.0124);"><span style="display:inline-block;transform:scaleX(0.74);transform-origin:0 50%;margin-right:-0.780em">すべて</span>復元</span>
</div></div>
</body></html>
